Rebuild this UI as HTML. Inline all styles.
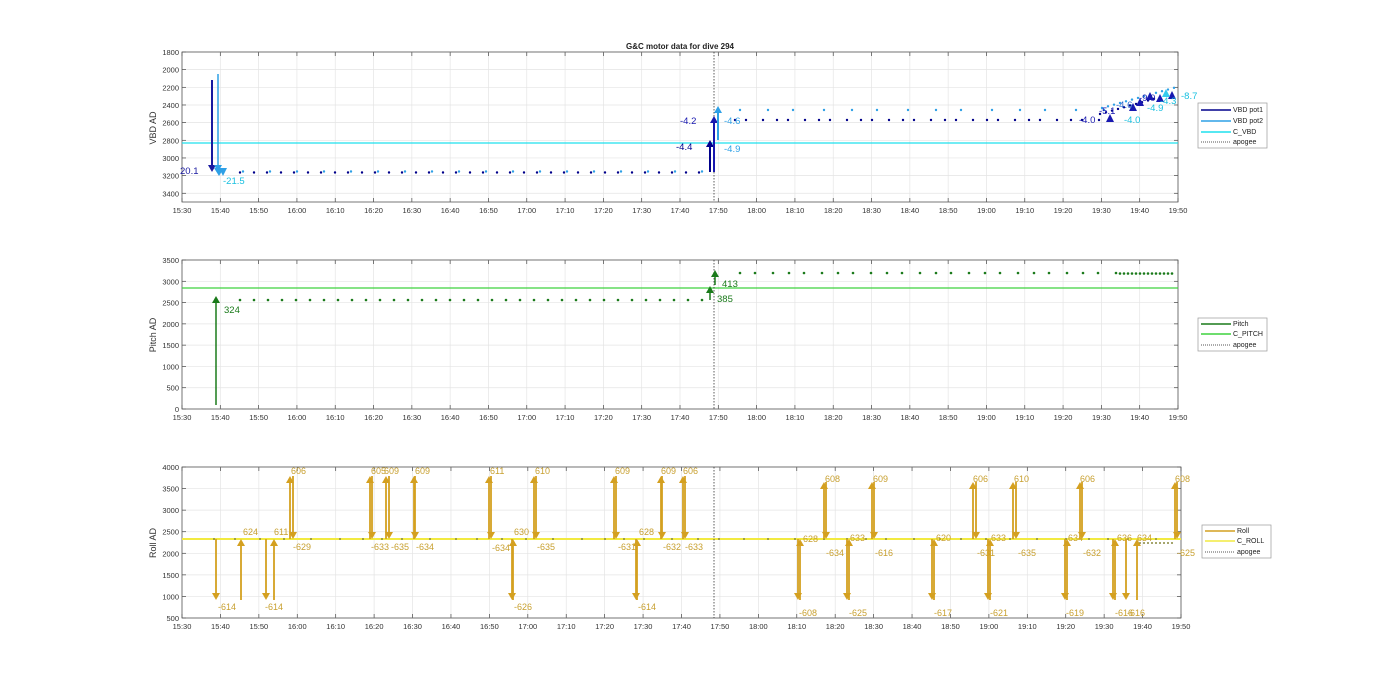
<!DOCTYPE html>
<html><head><meta charset="utf-8">
<style>
html,body{margin:0;padding:0;background:#fff;}
svg{display:block;font-family:"Liberation Sans",sans-serif;}
</style></head>
<body>
<svg id="s" width="1400" height="693" viewBox="0 0 1400 693" xmlns="http://www.w3.org/2000/svg">
<rect width="1400" height="693" fill="#fff"/>
<text x="680" y="49" font-size="8" font-weight="bold" text-anchor="middle" fill="#222">G&amp;C motor data for dive 294</text>
<g id="g"></g>
<text transform="translate(156,128) rotate(-90)" font-size="9" text-anchor="middle" fill="#333">VBD AD</text>
<text transform="translate(156,335) rotate(-90)" font-size="9" text-anchor="middle" fill="#333">Pitch AD</text>
<text transform="translate(156,543) rotate(-90)" font-size="9" text-anchor="middle" fill="#333">Roll AD</text>
<g font-size="7" fill="#222">
<rect x="1198" y="103" width="69" height="45" fill="#fff" stroke="#999" stroke-width="0.7"/>
<line x1="1201" y1="110" x2="1231" y2="110" stroke="#00008b" stroke-width="1.5"/><text x="1233" y="112">VBD pot1</text>
<line x1="1201" y1="121" x2="1231" y2="121" stroke="#2ea0e6" stroke-width="1.5"/><text x="1233" y="123">VBD pot2</text>
<line x1="1201" y1="132" x2="1231" y2="132" stroke="#1ee0ee" stroke-width="1.5"/><text x="1233" y="134">C_VBD</text>
<line x1="1201" y1="142" x2="1231" y2="142" stroke="#555" stroke-dasharray="1,1"/><text x="1233" y="144">apogee</text>

<rect x="1198" y="318" width="69" height="33" fill="#fff" stroke="#999" stroke-width="0.7"/>
<line x1="1201" y1="324" x2="1231" y2="324" stroke="#1a7a1a" stroke-width="1.5"/><text x="1233" y="326">Pitch</text>
<line x1="1201" y1="334" x2="1231" y2="334" stroke="#3fd23f" stroke-width="1.5"/><text x="1233" y="336">C_PITCH</text>
<line x1="1201" y1="345" x2="1231" y2="345" stroke="#555" stroke-dasharray="1,1"/><text x="1233" y="347">apogee</text>

<rect x="1202" y="525" width="69" height="33" fill="#fff" stroke="#999" stroke-width="0.7"/>
<line x1="1205" y1="531" x2="1235" y2="531" stroke="#d4a020" stroke-width="1.5"/><text x="1237" y="533">Roll</text>
<line x1="1205" y1="541" x2="1235" y2="541" stroke="#f2ea40" stroke-width="1.5"/><text x="1237" y="543">C_ROLL</text>
<line x1="1205" y1="552" x2="1235" y2="552" stroke="#555" stroke-dasharray="1,1"/><text x="1237" y="554">apogee</text>
</g>
</svg>
<script>
var NS="http://www.w3.org/2000/svg",G=document.getElementById("g");
function el(n,a,t){var e=document.createElementNS(NS,n);for(var k in a)e.setAttribute(k,a[k]);if(t!=null)e.textContent=t;G.appendChild(e);return e;}
var times=["15:30","15:40","15:50","16:00","16:10","16:20","16:30","16:40","16:50","17:00","17:10","17:20","17:30","17:40","17:50","18:00","18:10","18:20","18:30","18:40","18:50","19:00","19:10","19:20","19:30","19:40","19:50"];
function axes(x0,x1,y0,y1,yt){
 var n=26,dx=(x1-x0)/n;
 for(var i=0;i<=n;i++){var x=x0+i*dx;el("line",{x1:x,y1:y0,x2:x,y2:y1,stroke:"#e4e4e4","stroke-width":0.7});
  el("line",{x1:x,y1:y1,x2:x,y2:y1-4,stroke:"#444","stroke-width":0.7});el("line",{x1:x,y1:y0,x2:x,y2:y0+4,stroke:"#444","stroke-width":0.7});
  el("text",{x:x,y:y1+11,"font-size":7.5,"text-anchor":"middle",fill:"#333"},times[i]);}
 for(var j=0;j<yt.length;j++){var y=yt[j][0];el("line",{x1:x0,y1:y,x2:x1,y2:y,stroke:"#e4e4e4","stroke-width":0.7});
  el("line",{x1:x0,y1:y,x2:x0+4,y2:y,stroke:"#444","stroke-width":0.7});el("line",{x1:x1,y1:y,x2:x1-4,y2:y,stroke:"#444","stroke-width":0.7});
  el("text",{x:x0-3,y:y+3,"font-size":7.5,"text-anchor":"end",fill:"#333"},yt[j][1]);}
 el("rect",{x:x0,y:y0,width:x1-x0,height:y1-y0,fill:"none",stroke:"#555","stroke-width":0.8});
}
var t1=[];for(var v=1800;v<=3400;v+=200)t1.push([52+(v-1800)*0.0883,""+v]);
axes(182,1178,52,202,t1);
var t2=[];for(v=0;v<=3500;v+=500)t2.push([409-v*0.04257,""+v]);
axes(182,1178,260,409,t2);
var t3=[];for(v=500;v<=4000;v+=500)t3.push([618-(v-500)*0.04314,""+v]);
axes(182,1181,467,618,t3);
el("line",{x1:182,y1:143,x2:1178,y2:143,stroke:"#1ee0ee","stroke-width":1.2});
el("line",{x1:182,y1:288,x2:1178,y2:288,stroke:"#3fd23f","stroke-width":1.2});
el("line",{x1:182,y1:539,x2:1181,y2:539,stroke:"#f2ea40","stroke-width":2});
[[52,202],[260,409],[467,618]].forEach(function(r){el("line",{x1:714,y1:r[0],x2:714,y2:r[1],stroke:"#333","stroke-dasharray":"1.5,1.5","stroke-width":0.8});});
function dot(x,y,c,r){el("circle",{cx:x,cy:y,r:r||1.2,fill:c});}
function arrow(x,ya,yb,c,w){w=w||1.5;el("line",{x1:x,y1:ya,x2:x,y2:yb+(yb<ya?4:-4),stroke:c,"stroke-width":w});
 var d=yb<ya?1:-1;el("polygon",{points:(x-4)+","+(yb+d*7)+" "+(x+4)+","+(yb+d*7)+" "+x+","+yb,fill:c});}
function lbl(x,y,t,c,s){el("text",{x:x,y:y,"font-size":s||9.5,fill:c},t);}
var db="#00008b",lb="#2ea0e6",cy="#19c0e0";
var k=0;
for(var x=240;x<=708;x+=8+((x*7)%9)){dot(x,172.5,db);if((k++%2)==0)dot(x+3,171.5,lb);}
k=0;
for(x=735;x<=1100;x+=11+((x*3)%9)){dot(x,120,db);if((k++%2)==0)dot(x+5,110,lb);}
for(x=1100;x<=1175;x+=6){dot(x,114-(x-1100)*0.28,db);dot(x+2,108-(x-1100)*0.28,lb);}
arrow(212,80,172,"#1a1aa0",2);arrow(218,74,172,lb,1.5);
el("polygon",{points:"214,168 224,168 219,176",fill:lb});el("polygon",{points:"219,168 227,168 223,176",fill:lb});
lbl(180,174,"20.1","#1a1aa0");lbl(223,184,"-21.5",cy);
arrow(710,172,140,db,2);arrow(714,172,116,"#1818b0",2);arrow(718,140,106,lb,2);
lbl(676,150,"-4.4",db);lbl(680,124,"-4.2","#1818b0");lbl(724,124,"-4.6",lb);lbl(724,152,"-4.9",lb);
[[1110,120,"#1818b0"],[1133,109,"#1818b0"],[1140,104,"#1818b0"],[1150,98,"#1818b0"],[1160,100,"#1818b0"],[1172,97,"#1818b0"]].forEach(function(a){el("polygon",{points:(a[0]-4)+","+(a[1]+2)+" "+(a[0]+4)+","+(a[1]+2)+" "+a[0]+","+(a[1]-6),fill:a[2]});});
el("polygon",{points:"1162,97 1170,97 1166,89",fill:"#33ccee"});
lbl(1079,123,"-4.0","#1818b0");lbl(1099,114,"-5.1","#1818b0");lbl(1116,108,"-4.6","#2a66cc");lbl(1124,123,"-4.0",cy);lbl(1139,101,"-9.0","#1818b0");lbl(1147,111,"-4.9",cy);lbl(1160,104,"-4.3",cy);lbl(1181,99,"-8.7",cy);
var dg="#1a7a1a";
for(x=240;x<=708;x+=11+((x*5)%7))dot(x,300,dg,1.3);
for(x=740;x<=1120;x+=14+((x*3)%7))dot(x,273,dg,1.3);
for(x=1120;x<=1175;x+=4)dot(x,273.5,dg,1.3);
arrow(216,405,296,dg,1.5);lbl(224,313,"324",dg);
arrow(710,300,286,dg,1.5);lbl(717,302,"385",dg);
arrow(715,285,270,dg,1.5);lbl(722,287,"413",dg);
var go="#d4a020",gt="#c8a030";
for(x=214;x<=1175;x+=19+((x*7)%11))dot(x,539,"#8a8a40",1);
for(x=1140;x<=1175;x+=4)dot(x,543,"#8a8a40",1);
var T=476,M=539,B=600;
var R=[[216,"d","-614",218,610],[241,"u","624",243,535],[266,"d","-614",265,610],[274,"u","611",274,535],[290,"U","606",291,474],[293,"D","-629",293,550],
[370,"U","605",371,474],[372,"D","-633",371,550],[386,"U","609",384,474],[389,"D","-635",391,550],[414,"U","609",415,474],[415,"D","-634",416,550],
[489,"U","611",490,474],[491,"D","-634",492,551],[513,"u","630",514,535],[512,"d","-626",514,610],[534,"U","610",535,474],[536,"D","-635",537,550],
[614,"U","609",615,474],[616,"D","-631",618,550],[637,"u","628",639,535],[636,"d","-614",638,610],[661,"U","609",661,474],[662,"D","-632",663,550],[683,"U","606",683,474],[685,"D","-633",685,550],
[800,"u","628",803,542],[798,"d","-608",799,616],[824,"U","608",825,482],[826,"D","-634",826,556],[849,"u","633",850,541],[847,"d","-625",849,616],[872,"U","609",873,482],[874,"D","-616",875,556],
[934,"u","620",936,541],[932,"d","-617",934,616],[973,"U","606",973,482],[976,"D","-631",977,556],[990,"u","633",991,541],[988,"d","-621",990,616],[1013,"U","610",1014,482],[1016,"D","-635",1018,556],
[1067,"u","634",1068,541],[1065,"d","-619",1066,616],[1080,"U","606",1080,482],[1082,"D","-632",1083,556],[1115,"u","636",1117,541],[1113,"d","-616",1115,616],[1126,"d","-616",1127,616],[1137,"u","634",1137,541],[1175,"U","608",1175,482],[1177,"D","-625",1177,556]];
R.forEach(function(r){var a,b;
 if(r[1]=="d"){a=M;b=B;}else if(r[1]=="u"){a=B;b=M;}else if(r[1]=="U"){a=M;b=(r[0]>714?482:T);}else{a=(r[0]>714?482:T);b=M;}
 arrow(r[0],a,b,go,1.8);lbl(r[3],r[4],r[2],gt,9);});
</script>
</body></html>
